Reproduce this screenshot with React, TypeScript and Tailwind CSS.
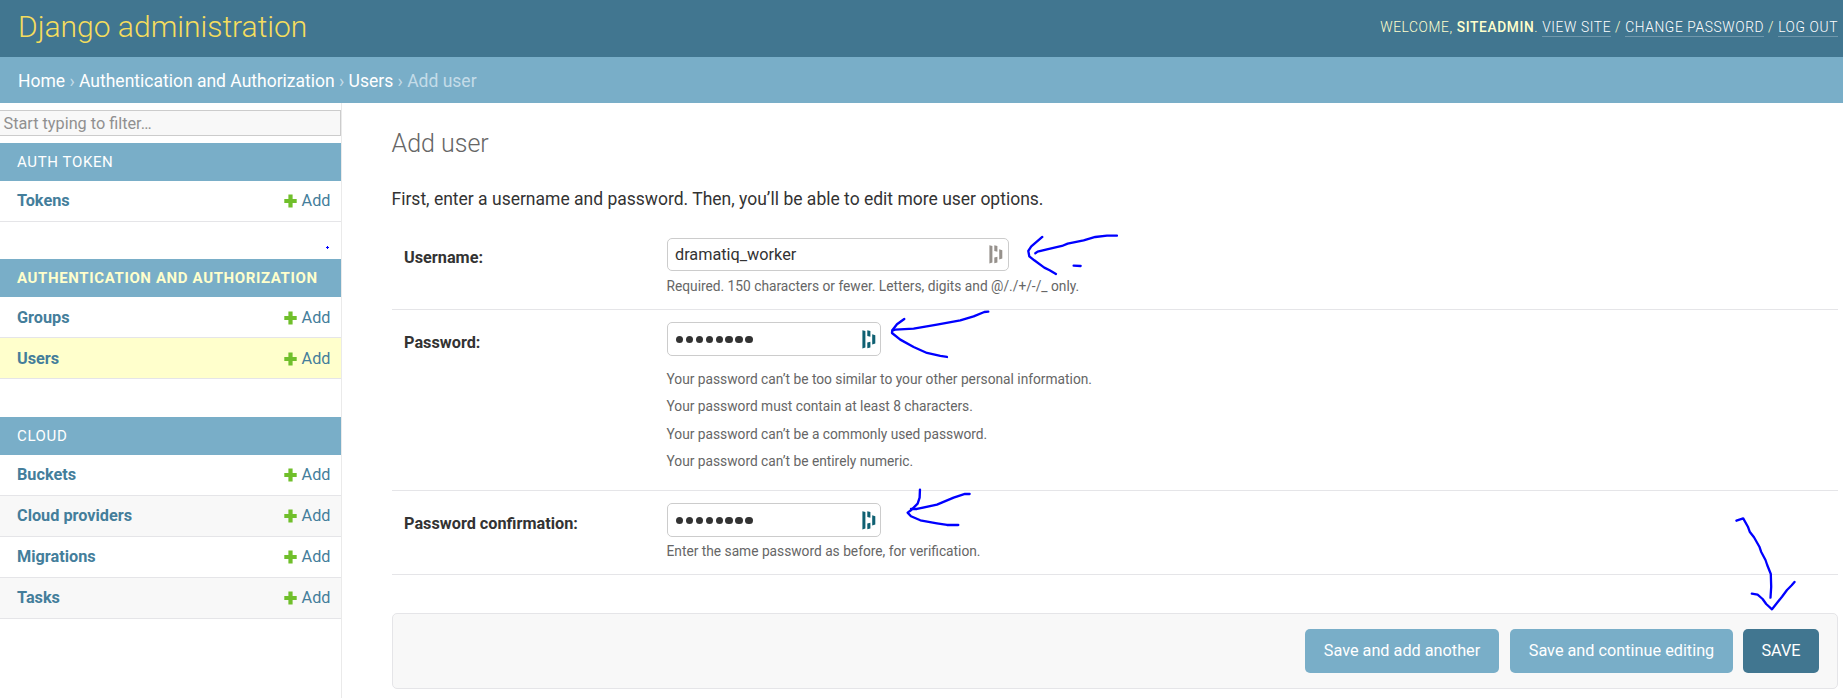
import type { ReactNode } from "react";

type Model = { name: string; tone?: "plain" | "alt" | "current" };

function AddLink() {
  return (
    <a className="flex items-center text-[#447e9b]">
      <svg width="13" height="14" viewBox="0 0 13 14" className="mr-[5px]">
        <path d="M4.4 0.4h4.2v4.5h4.1v4.1H8.6v4.4H4.4V9H0.3V4.9h4.1z" fill="#70bf2b" />
      </svg>
      Add
    </a>
  );
}

function Module({ title, models, current, className }: { title: string; models: Model[]; current?: boolean; className?: string }) {
  return (
    <section className={className}>
      <h2
        className={
          "flex h-[38px] items-center bg-[#79aec8] pl-[17px] text-[15px] tracking-[0.625px] uppercase " +
          (current ? "font-bold text-[#ffffcc]" : "font-normal text-white")
        }
      >
        {title}
      </h2>
      {models.map((m) => (
        <div
          key={m.name}
          className={
            "flex h-[41px] items-center justify-between border-b border-[#e5e5e8] pr-[10.5px] pl-[17px] text-[16.25px] leading-5 " +
            (current ? "pt-[2px] " : "") +
            (m.tone === "alt" ? "bg-[#f8f8f8]" : m.tone === "current" ? "bg-[#ffffcc]" : "bg-white")
          }
        >
          <a className="font-bold text-[#447e9b]">{m.name}</a>
          <AddLink />
        </div>
      ))}
    </section>
  );
}

function VaultIcon({ color }: { color: string }) {
  return (
    <svg width="14" height="19" viewBox="0 0 14 19" fill={color}>
      <path d="M0.4 0.2l3 0.8v16.6l-3 0.8z" />
      <path d="M5.3 0.2l3.1 0.9v5.7l-3.1-0.9z" />
      <path d="M5.3 12.6l3.1-0.9v5.7l-3.1 0.9z" />
      <path d="M10.2 4.2l3.1 1.1v8.1l-3.1 1.1z" />
    </svg>
  );
}

function PasswordDots() {
  return (
    <span className="flex gap-[2.5px] pt-[1px] pl-[1px]">
      {[0, 1, 2, 3, 4, 5, 6, 7].map((i) => (
        <span key={i} className="size-[7.4px] rounded-full bg-[#333]" />
      ))}
    </span>
  );
}

function Field({ label, className, labelClass, children }: { label: string; className: string; labelClass: string; children: ReactNode }) {
  return (
    <div className={"flex border-b border-[#e5e5e8] pl-[12px] " + className}>
      <label className={"w-[263px] shrink-0 text-[16.25px] leading-5 font-bold " + labelClass}>{label}</label>
      <div className="text-[13.75px] leading-[18px] text-[#666]">{children}</div>
    </div>
  );
}

function Annotations() {
  return (
    <svg
      className="pointer-events-none absolute top-0 left-0"
      width="1843"
      height="698"
      fill="none"
      stroke="#0000ff"
      strokeLinecap="round"
      strokeLinejoin="round"
    >
      <g transform="translate(660.3 220.3) scale(.33333)" strokeWidth="7">
        <path d="M1146 50L1113 78L1104 92L1107 108L1122 120L1152 142L1168 150L1187 161" />
        <path d="M1370 46H1340L1305 50L1270 60L1222 70L1205 77L1160 87L1132 94L1125 99" />
        <path d="M1240 136L1261 137" />
        <path d="M984 274L972 275L940 288L900 300L830 313L760 325L705 328L697 330" />
        <path d="M732 296L710 312L696 330L695 338L720 358L760 380L800 398L840 407L860 410" />
      </g>
      <g transform="translate(660.3 360.3) scale(.33333)" strokeWidth="7">
        <path d="M779 388L778 412L772 430L752 450L742 457L752 468L780 480L830 489L860 494H894" />
        <path d="M928 401H914L880 412L830 433L770 446H752" />
      </g>
      <g strokeWidth="2.3">
        <path d="M1736.4 520.7L1743.2 518.4L1747.9 526.7L1749.7 531.7L1754 537.3L1759.4 546.7L1761.1 551.7L1765.5 560L1767.2 565L1770.8 574L1771.2 586.7L1770.5 597.7" />
        <path d="M1751.8 593.7L1757.6 594.7L1762.6 599L1766.2 604L1772 609.3L1782 596.7L1787 590L1791.7 585.3L1794.5 582" />
      </g>
      <path d="M327.5 246v3M326 247.5h3" strokeWidth="1" strokeLinecap="butt" />
    </svg>
  );
}

const toolLink = "border-b border-white/25 pb-px text-white";
const inputBox = "flex items-center justify-between rounded-[5px] border border-[#ccc] bg-white pl-[7px] text-[16.25px] leading-5 text-[#333]";

export default function App() {
  return (
    <div className="relative flex h-[698px] w-full flex-col overflow-hidden bg-white font-['Roboto',sans-serif] text-[#333]">
      <header className="flex h-[57px] items-center justify-between bg-[#417690] pr-[5px] pl-[18px] text-[#ffffcc]">
        <h1 className="pb-[4px] text-[30px] leading-[34px] font-light text-[#f5dd5d]">Django administration</h1>
        <div className="pb-[4px] text-[13.75px] leading-[18px] font-light tracking-[0.625px] uppercase">
          Welcome, <strong className="font-medium">siteadmin</strong>. <a className={toolLink}>View site</a> /{" "}
          <a className={toolLink}>Change password</a> / <a className={toolLink}>Log out</a>
        </div>
      </header>
      <nav className="flex h-[46px] items-center bg-[#79aec8] pt-[2px] pl-[18px] text-[17.5px] text-[#c4dce8]">
        <div>
          <a className="text-white">Home</a> › <a className="text-white">Authentication and Authorization</a> ›{" "}
          <a className="text-white">Users</a> › Add user
        </div>
      </nav>
      <div className="flex flex-1">
        <aside className="w-[342px] shrink-0 border-r border-[#eaeaea] pt-[7px]">
          <div className="mb-[7px] flex h-[26px] items-center border border-l-0 border-[#ccc] bg-[#f8f8f8] pt-[2px] pl-[3.5px] text-[16.25px] leading-5 text-[#909090]">
            Start typing to filter…
          </div>
          <Module title="Auth Token" models={[{ name: "Tokens" }]} />
          <Module
            className="mt-[37px]"
            title="Authentication and Authorization"
            current
            models={[{ name: "Groups" }, { name: "Users", tone: "current" }]}
          />
          <Module
            className="mt-[38px]"
            title="Cloud"
            models={[
              { name: "Buckets" },
              { name: "Cloud providers", tone: "alt" },
              { name: "Migrations" },
              { name: "Tasks", tone: "alt" },
            ]}
          />
        </aside>
        <main className="flex-1 pr-[5px] pl-[50px]">
          <h2 className="-ml-[0.5px] pt-[26px] text-[25px] leading-[30px] font-light text-[#666]">Add user</h2>
          <p className="-ml-[0.5px] pt-[29px] text-[17.5px] leading-[22px]">
            First, enter a username and password. Then, you’ll be able to edit more user options.
          </p>
          <form>
            <Field label="Username:" className="mt-[15px] h-[85px] pt-[13px]" labelClass="pt-[10px]">
              <div className={inputBox + " h-[33px] w-[342px] pr-[5px]"}>
                dramatiq_worker
                <VaultIcon color="#96918c" />
              </div>
              <p className="-ml-[0.5px] pt-[6px]">Required. 150 characters or fewer. Letters, digits and @/./+/-/_ only.</p>
            </Field>
            <Field label="Password:" className="h-[181px] pt-[12px]" labelClass="pt-[11px]">
              <div className={inputBox + " h-[34px] w-[214px] pr-[4px]"}>
                <PasswordDots />
                <VaultIcon color="#0e6072" />
              </div>
              <ul className="-ml-[0.5px] pt-[10px] leading-[27.4px]">
                <li>Your password can’t be too similar to your other personal information.</li>
                <li>Your password must contain at least 8 characters.</li>
                <li>Your password can’t be a commonly used password.</li>
                <li>Your password can’t be entirely numeric.</li>
              </ul>
            </Field>
            <Field label="Password confirmation:" className="h-[84px] pt-[12px]" labelClass="pt-[11px]">
              <div className={inputBox + " h-[34px] w-[214px] pr-[4px]"}>
                <PasswordDots />
                <VaultIcon color="#0e6072" />
              </div>
              <p className="-ml-[0.5px] pt-[5px]">Enter the same password as before, for verification.</p>
            </Field>
            <div className="mt-[38px] flex h-[76px] items-center justify-end rounded-[5px] border border-[#e5e5e8] bg-[#f8f8f8] pr-[18px] text-[16.25px] text-white">
              <button type="button" className="mr-[11px] h-[44px] w-[194px] rounded-[5px] bg-[#79aec8]">
                Save and add another
              </button>
              <button type="button" className="mr-[10px] h-[44px] w-[223px] rounded-[5px] bg-[#79aec8]">
                Save and continue editing
              </button>
              <button type="button" className="h-[44px] w-[76px] rounded-[5px] bg-[#417690]">
                SAVE
              </button>
            </div>
          </form>
        </main>
      </div>
      <Annotations />
    </div>
  );
}
